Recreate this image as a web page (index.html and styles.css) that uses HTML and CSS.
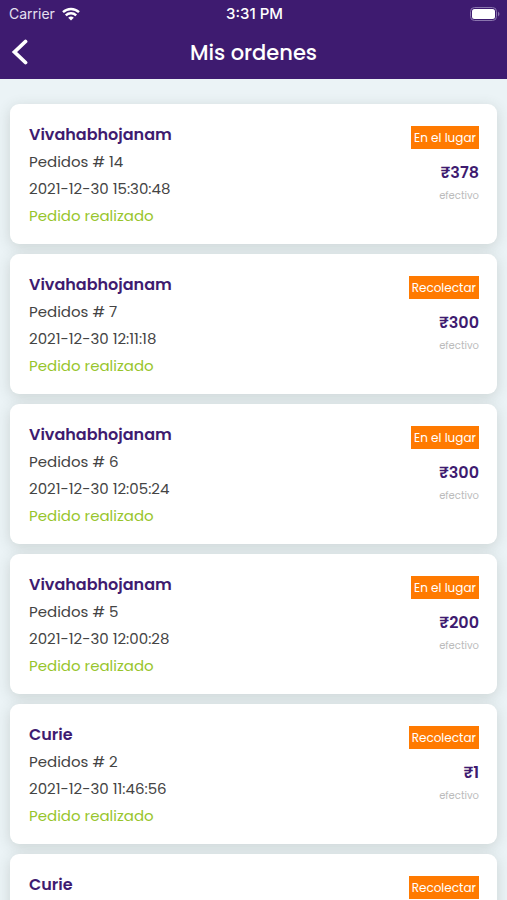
FILE: index.html
```html
<!DOCTYPE html>
<html lang="es">
<head>
  <meta charset="UTF-8">
  <meta name="viewport" content="width=device-width, initial-scale=1.0">
  <title>Mis ordenes</title>
  <link rel="stylesheet" href="styles.css">
</head>
<body>
  <header class="header">
    <div class="status-bar">
      <div class="carrier">
        <span>Carrier</span>
        <svg class="wifi" viewBox="0 0 18 14" aria-hidden="true">
          <path d="M1 5.2a11.5 11.5 0 0 1 16 0M3.8 8.4a7.4 7.4 0 0 1 10.4 0" fill="none" stroke="#fff" stroke-width="2.4"/>
          <path d="M9 13.6L6.200 10.800a4 4 0 0 1 5.600 0z" fill="#fff"/>
        </svg>
      </div>
      <span class="time">3:31 PM</span>
      <svg class="battery" viewBox="0 0 30 14" aria-hidden="true">
        <rect x="0.5" y="0.5" width="26" height="13" rx="4" fill="none" stroke="#8a75ae"/>
        <rect x="2" y="2" width="23" height="10" rx="2.5" fill="#fff"/>
        <path d="M28 4.5q3 2.5 0 5z" fill="#8a75ae"/>
      </svg>
    </div>
    <div class="title-bar">
      <button class="back" type="button" aria-label="Volver">
        <svg viewBox="0 0 18 28" aria-hidden="true"><path d="M15.500 3.500L4.500 14l11 10.500" fill="none" stroke="#fff" stroke-width="3.800" stroke-linecap="round"/></svg>
      </button>
      <h1>Mis ordenes</h1>
    </div>
  </header>

  <main class="orders">
    <article class="order">
      <div class="info">
        <h2>Vivahabhojanam</h2>
        <p>Pedidos # 14</p>
        <p>2021-12-30 15:30:48</p>
        <p class="status">Pedido realizado</p>
      </div>
      <div class="summary">
        <span class="tag">En el lugar</span>
        <span class="price">₹378</span>
        <span class="payment">efectivo</span>
      </div>
    </article>
    <article class="order">
      <div class="info">
        <h2>Vivahabhojanam</h2>
        <p>Pedidos # 7</p>
        <p>2021-12-30 12:11:18</p>
        <p class="status">Pedido realizado</p>
      </div>
      <div class="summary">
        <span class="tag">Recolectar</span>
        <span class="price">₹300</span>
        <span class="payment">efectivo</span>
      </div>
    </article>
    <article class="order">
      <div class="info">
        <h2>Vivahabhojanam</h2>
        <p>Pedidos # 6</p>
        <p>2021-12-30 12:05:24</p>
        <p class="status">Pedido realizado</p>
      </div>
      <div class="summary">
        <span class="tag">En el lugar</span>
        <span class="price">₹300</span>
        <span class="payment">efectivo</span>
      </div>
    </article>
    <article class="order">
      <div class="info">
        <h2>Vivahabhojanam</h2>
        <p>Pedidos # 5</p>
        <p>2021-12-30 12:00:28</p>
        <p class="status">Pedido realizado</p>
      </div>
      <div class="summary">
        <span class="tag">En el lugar</span>
        <span class="price">₹200</span>
        <span class="payment">efectivo</span>
      </div>
    </article>
    <article class="order">
      <div class="info">
        <h2>Curie</h2>
        <p>Pedidos # 2</p>
        <p>2021-12-30 11:46:56</p>
        <p class="status">Pedido realizado</p>
      </div>
      <div class="summary">
        <span class="tag">Recolectar</span>
        <span class="price">₹1</span>
        <span class="payment">efectivo</span>
      </div>
    </article>
    <article class="order">
      <div class="info">
        <h2>Curie</h2>
      </div>
      <div class="summary">
        <span class="tag">Recolectar</span>
      </div>
    </article>
  </main>
</body>
</html>
```

FILE: styles.css
```css
* {
  box-sizing: border-box;
}

body {
  margin: 0;
  background-color: #ebf3f6;
  color: #444;
  font-family: Poppins, Inter, sans-serif;
  font-size: 15px;
  line-height: 27px;
}

h1, h2, p {
  margin: 0;
}

.header {
  background-color: #3e1b70;
  color: #fff;
}

.status-bar {
  display: grid;
  grid-template-columns: 1fr auto 1fr;
  align-items: center;
  padding: 0 7px 0 9px;
  font-family: Inter, sans-serif;
  font-size: 14px;
}

.carrier {
  display: flex;
  align-items: center;
  gap: 7px;
  color: #e6e0f0;
}

.wifi {
  width: 18px;
  height: 14px;
}

.time {
  font-size: 15px;
  font-weight: 500;
}

.battery {
  width: 30px;
  height: 14px;
  justify-self: end;
}

.title-bar {
  display: grid;
  grid-template-columns: 1fr auto 1fr;
  align-items: center;
  height: 52px;
  padding: 0 10px 2px;
}

.back {
  display: flex;
  justify-self: start;
  padding: 0;
  border: none;
  background: none;
  cursor: pointer;
}

.back svg {
  width: 18px;
  height: 28px;
}

h1 {
  font-size: 21px;
  font-weight: 500;
}

.orders {
  display: flex;
  flex-direction: column;
  gap: 10px;
  padding: 25px 10px;
}

.order {
  display: flex;
  justify-content: space-between;
  min-height: 140px;
  padding: 17px 18px 15px 19px;
  border-radius: 9px;
  background-color: #fff;
  box-shadow: 0 3px 14px rgba(60, 70, 60, 0.18);
}

h2 {
  color: #3e1b70;
  font-size: 16px;
  font-weight: 600;
  line-height: 27px;
}

.status {
  color: #97c52c;
}

.summary {
  display: flex;
  flex-direction: column;
  align-items: flex-end;
  padding-top: 5px;
}

.tag {
  padding: 0 3px;
  background-color: #ff7a00;
  color: #fff;
  font-size: 12px;
  line-height: 23px;
}

.price {
  margin-top: 10px;
  color: #3e1b70;
  font-size: 16px;
  font-weight: 600;
}

.payment {
  color: #bbb;
  font-size: 10px;
  line-height: 20px;
}
```
